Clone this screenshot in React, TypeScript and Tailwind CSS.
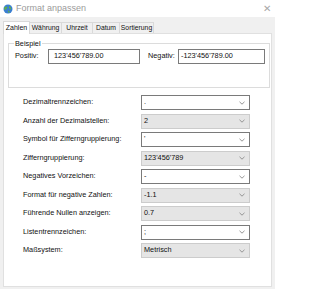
import React from "react";

const rows: { label: string; value: string; white: boolean }[] = [
  { label: "Dezimaltrennzeichen:", value: ".", white: true },
  { label: "Anzahl der Dezimalstellen:", value: "2", white: false },
  { label: "Symbol für Zifferngruppierung:", value: "'", white: true },
  { label: "Zifferngruppierung:", value: "123'456'789", white: false },
  { label: "Negatives Vorzeichen:", value: "-", white: true },
  { label: "Format für negative Zahlen:", value: "-1.1", white: false },
  { label: "Führende Nullen anzeigen:", value: "0.7", white: false },
  { label: "Listentrennzeichen:", value: ";", white: true },
  { label: "Maßsystem:", value: "Metrisch", white: false },
];

const tabs: { name: string; w: string }[] = [
  { name: "Zahlen", w: "w-[27px]" },
  { name: "Währung", w: "w-[32px]" },
  { name: "Uhrzeit", w: "w-[31px]" },
  { name: "Datum", w: "w-[27px]" },
  { name: "Sortierung", w: "w-[34px]" },
];

function Chevron() {
  return (
    <svg width="6" height="4" viewBox="0 0 6 4" className="shrink-0">
      <path d="M0.5 0.8 L3 3.2 L5.5 0.8" fill="none" stroke="#8a8a8a" strokeWidth="0.9" />
    </svg>
  );
}

function Globe() {
  return (
    <svg width="10" height="10" viewBox="0 0 10 10">
      <circle cx="5" cy="5" r="4.5" fill="#3b7fd0" />
      <path d="M2 3 C3 2 4 2.5 4.5 3.5 C4 4.5 3 4.5 3 6 C2 6 1.2 5 1 4 Z" fill="#5fb04a" />
      <path d="M6 2 C7.5 2.5 8.5 4 8 5.5 C7 5.5 6.5 4.5 6 4 Z" fill="#5fb04a" />
      <path d="M5 6.5 C6 6.5 7 7.5 6.5 8.8 C5.5 9 5 8 5 6.5 Z" fill="#5fb04a" />
    </svg>
  );
}

export default function App() {
  return (
    <div
      className="w-[275px] h-[289px] bg-white flex flex-col overflow-hidden text-[#111]"
      style={{ fontFamily: '"Liberation Sans", Arial, sans-serif' }}
    >
      {/* title bar */}
      <div className="h-[17px] flex items-center pl-[3px] pr-[4px] shrink-0">
        <Globe />
        <span className="ml-[3px] text-[9px] text-[#9b9b9b] leading-none">Format anpassen</span>
        <span className="ml-auto text-[10px] text-[#a8a8a8] leading-none">✕</span>
      </div>
      {/* body */}
      <div className="flex-1 bg-[#f0f0f0] flex flex-col pl-[3px] pr-[3px] pb-[2px]">
        <div className="h-[16px] flex items-end shrink-0">
          {tabs.map((t, i) =>
            i === 0 ? (
              <div
                key={t.name}
                className={`${t.w} h-[13px] bg-white border border-b-0 border-[#d9d9d9] text-[7px] flex items-center justify-center -mb-px relative z-10`}
              >
                {t.name}
              </div>
            ) : (
              <div
                key={t.name}
                className={`${t.w} h-[11px] border border-b-0 border-l-0 border-[#d9d9d9] text-[6.8px] flex items-center justify-center whitespace-nowrap`}
              >
                {t.name}
              </div>
            )
          )}
        </div>
        <div className="flex-1 bg-white border border-[#e0e0e0] flex flex-col pl-[4px] pr-px">
          {/* group box */}
          <div className="mt-[9px] h-[45px] border border-[#dcdcdc] relative pl-[6px] pt-[5px]">
            <span className="absolute -top-[5px] left-[5px] bg-white px-px text-[7.3px] leading-[9px]">Beispiel</span>
            <div className="flex items-center text-[7.3px]">
              <span className="w-[33px]">Positiv:</span>
              <div className="w-[92px] h-[15px] border border-[#7a7a7a] flex items-center px-[5px]">123'456'789.00</div>
              <span className="ml-[8px] w-[30px] whitespace-nowrap">Negativ:</span>
              <div className="w-[87px] h-[15px] border border-[#7a7a7a] flex items-center px-[2px]">-123'456'789.00</div>
            </div>
          </div>
          {/* rows */}
          <div className="mt-[7px] flex flex-col gap-[3.5px]">
            {rows.map((r) => (
              <div key={r.label} className="flex items-center h-[15px] text-[7.3px]">
                <span className="ml-[15px] w-[118px]">{r.label}</span>
                <div
                  className={
                    r.white
                      ? "w-[109px] h-[15px] bg-white border border-[#7a7a7a] flex items-center justify-between pl-[2px] pr-[4px]"
                      : "w-[109px] h-[15px] bg-[#e5e5e5] border border-[#cccccc] flex items-center justify-between pl-[2px] pr-[4px]"
                  }
                >
                  <span>{r.value}</span>
                  <Chevron />
                </div>
              </div>
            ))}
          </div>
        </div>
      </div>
    </div>
  );
}
